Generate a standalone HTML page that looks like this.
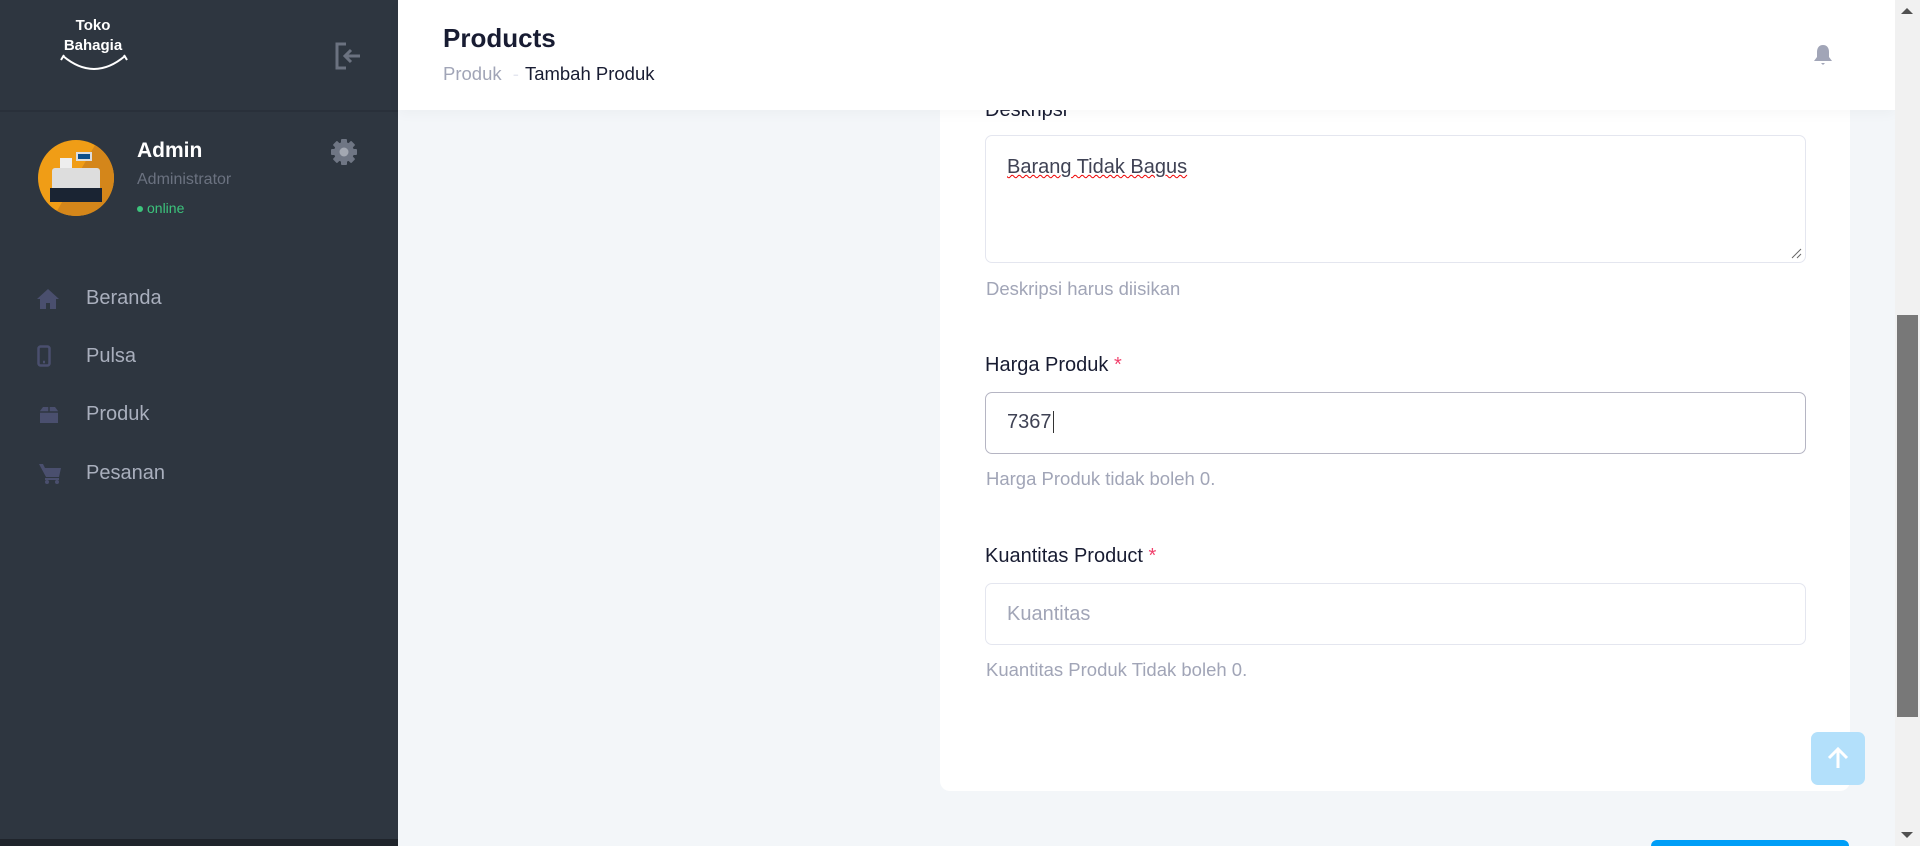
<!DOCTYPE html>
<html style="overflow:hidden;height:846px"><head><meta charset="utf-8"><style>
*{box-sizing:border-box;margin:0;padding:0}
body{width:1920px;height:846px;overflow:hidden;background:#f3f6f9;font-family:"Liberation Sans",sans-serif;position:relative}
.abs{position:absolute}
.side{left:0;top:0;width:398px;height:846px;background:#2e3640}
.menu{position:absolute;left:86px;font-size:20px;color:#a9afbd}
.lbl{position:absolute;left:985px;font-size:20px;color:#181c32}
.help{position:absolute;left:986px;font-size:18.5px;color:#a1a5b7}
.inp{position:absolute;left:985px;width:821px;border:1px solid #e4e6ef;border-radius:7px;background:#fff}
</style></head><body>
<div class="abs side">
  <div class="abs" style="left:0;top:110px;width:398px;height:2px;background:#29303a"></div>
  <div class="abs" style="left:55px;top:16px;width:76px;text-align:center;color:#fff;font-weight:bold;font-size:15px;line-height:20px">Toko<br>Bahagia</div>
  <svg class="abs" style="left:60px;top:52px" width="68" height="22"><path d="M3 4 Q34 30 65 4" stroke="#fff" stroke-width="2" fill="none"/><path d="M1 8 L4 3 M67 8 L64 3" stroke="#fff" stroke-width="2"/></svg>
  <svg class="abs" style="left:334px;top:42px" width="28" height="28" fill="none" stroke="#6b7280" stroke-width="3"><path d="M12 2H3v24h9"/><path d="M26 14H11M17 8l-6 6 6 6"/></svg>
  <div class="abs" style="left:38px;top:140px;width:76px;height:76px;border-radius:50%;background:#f09d16;overflow:hidden">
    <div class="abs" style="left:38px;top:0;width:76px;height:76px;background:#d4861a;transform:skewX(-30deg)"></div>
    <div class="abs" style="left:38px;top:12px;width:16px;height:9px;background:#0c4f8a;border:2px solid #ddd"></div>
    <div class="abs" style="left:22px;top:18px;width:12px;height:14px;background:#eee"></div>
    <div class="abs" style="left:14px;top:28px;width:48px;height:20px;background:#ddd;border-radius:3px 3px 0 0"></div>
    <div class="abs" style="left:12px;top:48px;width:52px;height:14px;background:#1a2433"></div>
  </div>
  <div class="abs" style="left:137px;top:139px;font-size:21px;font-weight:bold;color:#fff">Admin</div>
  <div class="abs" style="left:137px;top:171px;font-size:16px;color:#6b7280">Administrator</div>
  <div class="abs" style="left:137px;top:200px;font-size:14px;color:#3cc47c"><span style="display:inline-block;width:6px;height:6px;border-radius:50%;background:#3cc47c;vertical-align:middle;margin-right:4px"></span>online</div>
  <svg class="abs" style="left:330px;top:138px" width="28" height="28"><g fill="#6f7684"><rect x="11" y="1" width="6" height="26" rx="1"/><rect x="11" y="1" width="6" height="26" rx="1" transform="rotate(45 14 14)"/><rect x="11" y="1" width="6" height="26" rx="1" transform="rotate(90 14 14)"/><rect x="11" y="1" width="6" height="26" rx="1" transform="rotate(135 14 14)"/><circle cx="14" cy="14" r="10"/></g><circle cx="14" cy="14" r="4.5" fill="#a3a8b2"/></svg>
  <svg class="abs" style="left:36px;top:288px" width="24" height="22" fill="#4a4f6e"><path d="M12 1L1 11h3v10h6v-6h4v6h6V11h3z"/></svg>
  <svg class="abs" style="left:37px;top:345px" width="14" height="22" fill="none" stroke="#4a4f6e" stroke-width="2.5"><rect x="1.5" y="1.5" width="11" height="19" rx="2"/><path d="M6 17h2"/></svg>
  <svg class="abs" style="left:39px;top:406px" width="20" height="18" fill="#4a4f6e"><path d="M1 5l3-4h12l3 4v12H1z"/><path d="M1 6h18" stroke="#2e3640" stroke-width="1.5"/><path d="M10 1v5" stroke="#2e3640" stroke-width="1.5"/></svg>
  <svg class="abs" style="left:38px;top:463px" width="24" height="22" fill="#4a4f6e"><path d="M1 1h4l2 4h16l-2 9H8z"/><circle cx="9" cy="19" r="2"/><circle cx="19" cy="19" r="2"/><rect x="7" y="15" width="14" height="2"/></svg>
  <div class="menu" style="top:287px">Beranda</div>
  <div class="menu" style="top:345px">Pulsa</div>
  <div class="menu" style="top:403px">Produk</div>
  <div class="menu" style="top:462px">Pesanan</div>
  <div class="abs" style="left:0;top:839px;width:398px;height:7px;background:#1f242b"></div>
</div>
<div class="abs" style="left:940px;top:100px;width:910px;height:691px;background:#fff;border-radius:10px"></div>
<div class="lbl" style="top:99px">Deskripsi</div>
<div class="inp" style="top:135px;height:128px"></div>
<div class="abs" style="left:1007px;top:156px;font-size:20px;color:#3f4254;text-decoration:underline wavy #e00;text-decoration-thickness:1px">Barang Tidak Bagus</div>
<svg class="abs" style="left:1790px;top:247px" width="12" height="12" stroke="#666"><path d="M2 11L11 2M7 11l4-4"/></svg>
<div class="help" style="top:278px">Deskripsi harus diisikan</div>
<div class="lbl" style="top:354px">Harga Produk <span style="color:#f1416c">*</span></div>
<div class="inp" style="top:392px;height:62px;border-color:#b5b5c3"></div>
<div class="abs" style="left:1007px;top:411px;font-size:20px;color:#3f4254">7367<span style="border-left:1px solid #333;margin-left:1px"></span></div>
<div class="help" style="top:468px">Harga Produk tidak boleh 0.</div>
<div class="lbl" style="top:545px">Kuantitas Product <span style="color:#f1416c">*</span></div>
<div class="inp" style="top:583px;height:62px"></div>
<div class="abs" style="left:1007px;top:603px;font-size:20px;color:#a1a5b7">Kuantitas</div>
<div class="help" style="top:659px">Kuantitas Produk Tidak boleh 0.</div>
<div class="abs" style="left:1651px;top:840px;width:198px;height:6px;background:#009ef7;border-radius:6px 6px 0 0"></div>
<div class="abs" style="left:1811px;top:732px;width:54px;height:53px;background:#b3e0fb;border-radius:7px"></div>
<svg class="abs" style="left:1826px;top:746px" width="24" height="24" stroke="#fff" stroke-width="3" fill="none"><path d="M12 22V3M3 12l9-9 9 9"/></svg>
<div class="abs" style="left:398px;top:0;width:1497px;height:110px;background:#fff;box-shadow:0 4px 12px rgba(0,0,0,0.03)"></div>
<div class="abs" style="left:443px;top:23px;font-size:26px;font-weight:bold;color:#181c32">Products</div>
<div class="abs" style="left:443px;top:63px;font-size:18.5px;color:#a1a5b7">Produk <span style="color:#e4e6ef;margin:0 6px">-</span><span style="color:#181c32">Tambah Produk</span></div>
<svg class="abs" style="left:1813px;top:44px" width="20" height="22" fill="#a1a5b7"><path d="M10 1c-4 0-6 3-6 7v5l-3 4h18l-3-4V8c0-4-2-7-6-7z"/><path d="M8 19h4l-2 2z"/></svg>
<div class="abs" style="left:1895px;top:0;width:25px;height:846px;background:#f1f1f1"></div>
<div class="abs" style="left:1897px;top:315px;width:21px;height:402px;background:#787878"></div>
<svg class="abs" style="left:1899px;top:6px" width="16" height="10" fill="#505050"><path d="M2 8L8 2 14 8z"/></svg>
<svg class="abs" style="left:1899px;top:830px" width="16" height="10" fill="#505050"><path d="M2 2L8 8 14 2z"/></svg>
</body></html>
